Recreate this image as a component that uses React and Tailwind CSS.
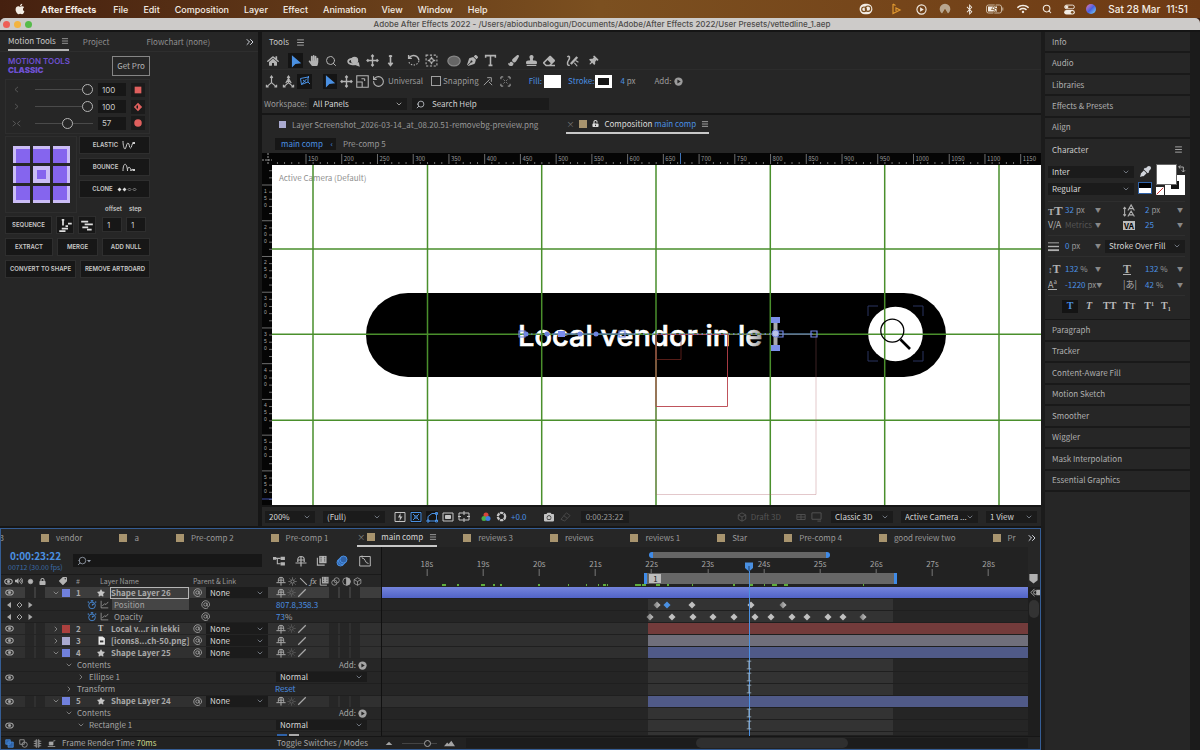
import { FaApple, FaBluetoothB, FaWifi, FaHome, FaHandPaper, FaPenNib, FaPaintBrush, FaStamp, FaEraser, FaThumbtack, FaCamera, FaLock, FaTag, FaStar, FaVolumeUp, FaEyeDropper, FaUnlockAlt } from 'react-icons/fa'
import { ChevronDown, ChevronRight, Search, Menu, RotateCcw, ChevronsRight } from 'lucide-react'

const menus = ['File', 'Edit', 'Composition', 'Layer', 'Effect', 'Animation', 'View', 'Window', 'Help']

const topPanels = ['Info', 'Audio', 'Libraries', 'Effects & Presets', 'Align']
const bottomPanels = ['Paragraph', 'Tracker', 'Content-Aware Fill', 'Motion Sketch', 'Smoother', 'Wiggler', 'Mask Interpolation', 'Essential Graphics']

const compTabs = [
  { name: 'vendor' }, { name: 'a' }, { name: 'Pre-comp 2' }, { name: 'Pre-comp 1' },
  { name: 'main comp', active: true },
  { name: 'reviews 3', afterActive: true }, { name: 'reviews' }, { name: 'reviews 1' }, { name: 'Star' },
  { name: 'Pre-comp 4' }, { name: 'good review two' }, { name: 'Pr' },
]

const rows = [
  { type: 'layer', num: 1, name: 'Shape Layer 26', icon: 'star', swatch: 'bg-[#7080dc]', open: true, selected: true, sun: true, bar: 'bg-linear-to-b from-[#7484dc] to-[#5163c6]', from: 17.2 },
  { type: 'prop', name: 'Position', value: '807.8,358.3', selected: true, keys: [22.1, 22.27, 22.71, 23.76, 24.33], activeKey: 22.27, half: [22.1, 24.33] },
  { type: 'prop', name: 'Opacity', value: '73', unit: '%', keys: [21.97, 22.37, 22.73, 23.1, 23.47, 23.84, 24.13, 24.5, 24.77, 25.14, 25.4, 25.77], half: [21.97, 25.77] },
  { type: 'layer', num: 2, name: 'Local v...r in lekki', icon: 'text', swatch: 'bg-[#ab403e]', sun: true, bar: 'bg-[#733b3b]', from: 21.93 },
  { type: 'layer', num: 3, name: '[icons8...ch-50.png]', icon: 'file', swatch: 'bg-[#a9a9cf]', bar: 'bg-[#706f7b]', from: 21.93 },
  { type: 'layer', num: 4, name: 'Shape Layer 25', icon: 'star', swatch: 'bg-[#7080dc]', open: true, sun: true, bar: 'bg-[#505a88]', from: 21.93 },
  { type: 'group', name: 'Contents', open: true, add: true, indent: 'pl-[65px]', beam: true },
  { type: 'group', name: 'Ellipse 1', eye: true, mode: true, indent: 'pl-[77px]', beam: true },
  { type: 'group', name: 'Transform', reset: true, indent: 'pl-[65px]', beam: true },
  { type: 'layer', num: 5, name: 'Shape Layer 24', icon: 'star', swatch: 'bg-[#7080dc]', open: true, sun: true, bar: 'bg-[#505a88]', from: 21.93 },
  { type: 'group', name: 'Contents', open: true, add: true, indent: 'pl-[65px]', beam: true },
  { type: 'group', name: 'Rectangle 1', open: true, eye: true, mode: true, indent: 'pl-[77px]', beam: true },
]

const seconds = [18, 19, 20, 21, 22, 23, 24, 25, 26, 27, 28]
const cached = [
  [18.27, 4], [18.54, 2], [18.97, 4], [19.17, 2], [19.3, 2], [19.98, 2], [20.51, 1], [20.84, 1], [21.05, 1], [21.14, 3], [21.21, 1],
  [21.7, 6], [21.83, 4], [22.07, 4], [22.27, 2], [22.72, 1], [23.45, 2], [23.75, 3], [24, 1], [24.14, 3], [24.2, 2], [24.35, 4], [25.77, 1],
]

const VIEW_START = 17.2
const VIEW_LENGTH = 11.5
const at = s => `${((s - VIEW_START) / VIEW_LENGTH) * 100}%`

function Icon({ size = 12, className = '', children }) {
  return (
    <svg viewBox="0 0 12 12" width={size} height={size} fill="none" stroke="currentColor" strokeWidth="1" className={`shrink-0 ${className}`} aria-hidden="true">
      {children}
    </svg>
  )
}

const Arrow = () => <Icon size={14}><path d="M2.500 1v10.500l3-3 5-.5z" fill="currentColor" stroke="none" /></Icon>
const Cross = () => <Icon size={13}><path d="M6 1v10M1 6h10M4.800 2.200 6 1l1.200 1.200M4.800 9.800 6 11l1.200-1.200M2.200 4.800 1 6l1.200 1.200M9.800 4.800 11 6 9.800 7.200" strokeWidth="1.300" /></Icon>
const Eye = () => <Icon size={9}><ellipse cx="6" cy="6" rx="5" ry="3.400" strokeWidth="1.400" /><circle cx="6" cy="6" r="1.600" fill="currentColor" /></Icon>
const Swirl = () => <Icon size={9}><path d="M9.500 10.200A5.200 5.200 0 1 1 11.300 5v2a1.600 1.600 0 0 1-3.200 0V3.500M8.100 6a2.200 2.200 0 1 1-4.400 0 2.200 2.200 0 0 1 4.400 0" strokeWidth="1.100" /></Icon>
const Hat = ({ size = 10 }) => <Icon size={size}><path d="M2.800 7V4.500a3.200 3 0 0 1 6.400 0V7M2.800 5h6.400M.5 8h11M6 2v9.500" strokeWidth="1.200" /></Icon>
const Sun = () => <Icon size={9}><circle cx="6" cy="6" r="2.300" /><path d="M6 .5v2M6 9.500v2M.5 6h2M9.500 6h2M2 2l1.300 1.300M8.700 8.700 10 10M10 2 8.700 3.300M3.300 8.700 2 10" strokeWidth=".8" /></Icon>
const Slash = () => <Icon size={10}><path d="M1.500 10.500 10.500 1.500" strokeWidth="1.400" /></Icon>
const BackSlash = () => <Icon size={9}><path d="M1.500 1.500 10.500 10.500" strokeWidth="1.400" /></Icon>
const Graph = () => <Icon size={9}><path d="M1.500 1v9.500H11M3 8l3-3 2 1 3-3.500" /></Icon>
const Film = ({ size = 10 }) => <Icon size={size}><path d="M3.500 1h8v8h-8z" fill="currentColor" stroke="none" /><path d="M1.500 3v8h8" strokeWidth="1.200" /><path d="M5.500 2v6M9.500 2v6" stroke="#262626" strokeDasharray="1 1" /></Icon>
const Play = () => <Icon size={9}><circle cx="6" cy="6" r="5.500" fill="currentColor" stroke="none" /><path d="M4.500 3.300v5.400L9 6z" fill="#262626" stroke="none" /></Icon>
const Axis = ({ label }) => <Icon size={13}><path d="M6 1.500v5.500L2 10.500M6 7l4 3.500M4.800 2.700 6 1l1.200 1.700M1.300 9v2h2M10.700 9v2h-2" strokeWidth="1.100" />{label && <path d="M3.500 7.500 6 3l2.500 4.500M4.500 6h3" />}</Icon>

function Dropdown({ label, value, className = '' }) {
  return (
    <div className={`relative shrink-0 flex items-center bg-[#1b1b1b] text-[#d6d6d6] ${className}`}>
      <select aria-label={label} className="w-full h-full appearance-none bg-transparent pl-1 outline-none">
        <option>{value}</option>
      </select>
      <ChevronDown size={8} className="absolute right-1 pointer-events-none text-gray-400" />
    </div>
  )
}

function ToolButton({ label, active, className = 'w-[18px]', children }) {
  return (
    <button aria-label={label} className={`h-[15px] shrink-0 flex items-center justify-center ${active ? 'bg-[#141414] text-[#4a90e2]' : 'text-[#b4b4b4]'} ${className}`}>
      {children}
    </button>
  )
}

function MenuBar() {
  return (
    <div className="h-[18px] shrink-0 flex items-center bg-linear-to-r from-[#45200f] via-[#7c5020] to-[#6e3a14] text-[#f3ece4] text-[9px] leading-none font-medium font-[Inter,sans-serif]">
      <FaApple size={12} className="ml-[14px]" />
      <nav className="flex items-center gap-[15px] ml-[15px]">
        <button className="font-bold mr-[2px]">After Effects</button>
        {menus.map(m => <button key={m}>{m}</button>)}
      </nav>
      <div className="ml-auto mr-[12px] flex items-center">
        <Icon size={14} className="mr-[17px]"><rect x=".5" y="1.500" width="11" height="9" rx="4.500" fill="currentColor" stroke="none" /><circle cx="4.300" cy="6.300" r="2" stroke="#7a4e20" /><circle cx="7.700" cy="5.700" r="2.300" stroke="#7a4e20" /></Icon>
        <Icon size={12} className="text-[#e0982f] mr-[14px]"><path d="M3 1v9.500L10 7 6 5v3M3 1l2.500 1.500" strokeWidth="1.200" /></Icon>
        <Icon size={11} className="mr-[12px]"><circle cx="6" cy="6" r="5" strokeWidth="1.200" /><path d="M4.500 3.500v5l4-2.500z" fill="currentColor" stroke="none" /></Icon>
        <Icon size={12} className="mr-[13px] text-[#b8a68f]"><path d="M3 10.500a5.300 5.300 0 1 1 6 0L6 6z" fill="currentColor" stroke="none" /><path d="M6 6 4 11h4z" fill="#7a4e20" stroke="none" /></Icon>
        <FaBluetoothB size={11} className="mr-[11px]" />
        <svg width="18" height="10" viewBox="0 0 18 10" className="mr-[13px]" aria-hidden="true">
          <rect x=".5" y="1" width="15" height="8" rx="2" fill="none" stroke="#c9b49c" />
          <rect x="2" y="2.500" width="9" height="5" fill="#f3ece4" />
          <path d="M9.500 0 5.500 5.500h3L7.500 10l4-5.500h-3z" fill="#fff" stroke="#7a4e20" strokeWidth=".8" />
          <path d="M16.800 3.500v3" stroke="#c9b49c" />
        </svg>
        <FaWifi size={12} className="mr-[13px]" />
        <Search size={10} strokeWidth={2.5} className="mr-[12px]" />
        <Icon size={11} className="mr-[11px]"><rect x=".7" y="1.200" width="10.600" height="4" rx="2" /><rect x=".2" y="6.500" width="11.600" height="5" rx="2.500" fill="currentColor" stroke="none" /><circle cx="3" cy="3.200" r="1.300" fill="currentColor" /><circle cx="9" cy="9" r="1.500" fill="#7a4e20" stroke="none" /></Icon>
        <span className="w-[10px] h-[10px] rounded-full bg-linear-to-br from-[#e66aa8] via-[#4b5fe0] to-[#7fd6ee] mr-[12px]" />
        <span className="flex gap-[6px] text-[10px]"><span>Sat 28 Mar</span><span>11:51</span></span>
      </div>
    </div>
  )
}

function TitleBar() {
  return (
    <div className="bg-[#3a1c10] shrink-0">
      <div className="h-[14px] rounded-t-[5px] bg-[#cdcbc9] flex items-center pl-[3px] pr-[32px] gap-[4px] border-b-2 border-[#151515]">
        <span className="w-[7px] h-[7px] rounded-full bg-[#ee5f56]" />
        <span className="w-[7px] h-[7px] rounded-full bg-[#f3b43f]" />
        <span className="w-[7px] h-[7px] rounded-full bg-[#56bb4a]" />
        <h1 className="flex-1 text-center text-[8px] leading-none font-medium text-[#4d4b49] font-[Inter,sans-serif] whitespace-nowrap">
          Adobe After Effects 2022 - /Users/abiodunbalogun/Documents/Adobe/After Effects 2022/User Presets/vettedline_1.aep
        </h1>
      </div>
    </div>
  )
}

const easeRows = [
  { label: 'Ease in', value: 100, mark: <path d="M8 2.500 4 6l4 3.500" />, dot: <rect x="2" y="2" width="8" height="8" /> },
  { label: 'Ease out', value: 100, mark: <path d="M4 2.500 8 6l-4 3.500" />, dot: <path d="M6 1 11 6 6 11 1 6zM6 4a2 2 0 0 0 0 4z" fillRule="evenodd" /> },
  { label: 'Ease both', value: 57, mark: <path d="M1 2.500 5 6 1 9.500M11 2.500 7 6l4 3.500" />, dot: <circle cx="6" cy="6" r="4.500" /> },
]

const anchors = [
  'border-t-[3px] border-l-[3px]', 'border-t-[3px]', 'border-t-[3px] border-r-[3px]',
  'border-l-[3px]', 'border-[4px]', 'border-r-[3px]',
  'border-b-[3px] border-l-[3px]', 'border-b-[3px]', 'border-b-[3px] border-r-[3px]',
]

const mtButton = 'h-[18px] bg-[#171717] border border-[#2e2e2e] flex items-center justify-center gap-1 whitespace-nowrap'

function MotionTools() {
  return (
    <section className="w-[258px] shrink-0 bg-[#262626] overflow-hidden">
      <div className="h-[20px] flex items-center pl-[8px] pr-[2px] text-[#8f8f8f] border-b border-[#2e2e2e]">
        <button className="h-[18px] flex items-center gap-[5px] border-b-2 border-[#b5b5b5] text-[#c8c8c8]">Motion Tools <Menu size={8} /></button>
        <button className="ml-[14px]">Project</button>
        <button className="ml-[37px]">Flowchart (none)</button>
        <ChevronsRight size={12} className="ml-auto text-gray-300" />
      </div>
      <div className="pl-[5px] pt-[4px] w-[150px] text-[6px] font-semibold font-[Inter,sans-serif] text-[#c9c9c9]">
        <div className="flex justify-between pl-[3px]">
          <h2 className="pt-px text-[8px] leading-[9px] font-semibold text-[#6d50cf]">MOTION TOOLS<br /><b>CLASSIC</b></h2>
          <button className="w-[38px] h-[20px] border border-[#858585] text-[8px] font-normal text-[#b4b4b4] font-['Noto_Sans_CJK_SC',sans-serif]">Get Pro</button>
        </div>
        <div className="mt-[3px] h-[55px] border border-[#2e2e2e] flex flex-col justify-evenly">
          {easeRows.map(r => (
            <div key={r.label} className="flex items-center pl-[6px] h-[14px]">
              <Icon size={9} className="text-[#666]">{r.mark}</Icon>
              <input type="range" aria-label={r.label} defaultValue={r.value} className="ml-[14px] w-[58px] h-[12px] appearance-none bg-transparent [&::-webkit-slider-runnable-track]:h-[1px] [&::-webkit-slider-runnable-track]:bg-[#4a4a4a] [&::-webkit-slider-thumb]:appearance-none [&::-webkit-slider-thumb]:w-[11px] [&::-webkit-slider-thumb]:h-[11px] [&::-webkit-slider-thumb]:-mt-[5px] [&::-webkit-slider-thumb]:rounded-full [&::-webkit-slider-thumb]:border-[1px] [&::-webkit-slider-thumb]:border-[#b5b5b5] [&::-webkit-slider-thumb]:bg-[#262626]" />
              <input aria-label={`${r.label} value`} defaultValue={r.value} className="ml-[5px] w-[28px] h-[13px] bg-[#171717] pl-[4px] text-[8px] font-normal outline-none" />
              <button aria-label={`Apply ${r.label}`} className="ml-[5px] w-[14px] h-[14px] bg-[#1b1b1b] flex items-center justify-center text-[#e0605e]">
                <svg width="10" height="10" viewBox="0 0 12 12" fill="currentColor">{r.dot}</svg>
              </button>
            </div>
          ))}
        </div>
        <div className="mt-[2px] flex gap-[2px]">
          <div className="w-[72px] h-[77px] border border-[#2e2e2e] flex items-center justify-center">
            <div className="grid grid-cols-3 gap-[3px]">
              {anchors.map(a => <button key={a} aria-label="Anchor point" className={`w-[17px] h-[17px] bg-[#8565ee] border-[#cbbdf6] ${a}`} />)}
            </div>
          </div>
          <div className="flex-1 flex flex-col gap-[4px]">
            <button className={mtButton}>ELASTIC <svg width="14" height="9" viewBox="0 0 14 9" fill="none" stroke="#ccc" aria-hidden="true"><path d="M1 0c0 4 1 8 2 8s1.500-6 3-6 1 5 2.500 5 1-5 3-5" /><path d="M10.500 1h2.500v2h-2.500z" fill="#ccc" stroke="none" /></svg></button>
            <button className={mtButton}>BOUNCE <svg width="14" height="9" viewBox="0 0 14 9" fill="none" stroke="#ccc" aria-hidden="true"><path d="M1 8c0-9 4-9 4.500 0 0-5 3-5 3.500 0 0-2 2-2 2-1" /><path d="M10.500 6h2.500v2h-2.500z" fill="#ccc" stroke="none" /></svg></button>
            <button className={mtButton}>CLONE <svg width="20" height="5" viewBox="0 0 20 5" fill="#ddd" aria-hidden="true"><path d="M2.500.5l2 2-2 2-2-2zM7.500.5l2 2-2 2-2-2z" /><path d="M12.500 1l1.500 1.500-1.500 1.500-1.500-1.500zM17.500 1l1.500 1.500-1.500 1.500-1.500-1.500z" fill="none" stroke="#aaa" strokeWidth=".7" /></svg></button>
            <div className="flex gap-[7px] pl-[26px] pt-[4px] leading-none"><label htmlFor="offset">offset</label><label htmlFor="step">step</label></div>
          </div>
        </div>
        <div className="mt-[3px] flex gap-[4px]">
          <button className={`${mtButton} w-[47px]`}>SEQUENCE</button>
          <button aria-label="Stagger" className={`${mtButton} w-[18px]`}><Icon size={15}><path d="M3 1.500h2M4 1v5M1 10.500h5M3 8.500h5M6 6.500h2M8 4.500h3" stroke="#ddd" strokeWidth="1.400" /></Icon></button>
          <button aria-label="Stack" className={`${mtButton} w-[18px]`}><Icon size={14}><path d="M1 3h6M4 5.500h7M2 8h5M6 10h4" stroke="#ddd" strokeWidth="1.500" /></Icon></button>
          <input id="offset" defaultValue="1" className="ml-[2px] w-[20px] h-[15px] mt-px bg-[#171717] border border-[#2e2e2e] pl-[4px] text-[8px] font-normal outline-none" />
          <input id="step" defaultValue="1" className="w-[20px] h-[15px] mt-px bg-[#171717] border border-[#2e2e2e] pl-[4px] text-[8px] font-normal outline-none" />
        </div>
        <div className="mt-[4px] flex gap-[4px]">
          <button className={`${mtButton} w-[48px]`}>EXTRACT</button>
          <button className={`${mtButton} w-[41px]`}>MERGE</button>
          <button className={`${mtButton} flex-1`}>ADD NULL</button>
        </div>
        <div className="mt-[4px] flex gap-[4px]">
          <button className={`${mtButton} w-[71px]`}>CONVERT TO SHAPE</button>
          <button className={`${mtButton} flex-1`}>REMOVE ARTBOARD</button>
        </div>
      </div>
    </section>
  )
}

function Tools() {
  return (
    <section className="h-[81px] shrink-0 bg-[#262626] text-[#9b9b9b]">
      <h2 className="h-[20px] flex items-center gap-[7px] pl-[7px] text-[#c8c8c8]">Tools <Menu size={9} /></h2>
      <div className="flex items-center h-[18px] pl-[2px] border-b border-[#2c2c2c]">
        <ToolButton label="Home"><FaHome size={12} /></ToolButton>
        <ToolButton label="Selection" active className="w-[15px] ml-[6px] mr-[1px]"><Arrow /></ToolButton>
        <ToolButton label="Hand"><FaHandPaper size={11} /></ToolButton>
        <ToolButton label="Zoom"><Search size={12} /></ToolButton>
        <ToolButton label="Orbit" className="w-[18px] ml-[5px]"><Icon size={14}><path d="M10 7.500c-2 2.500-9 1.500-9-1s5-3 7-1.500" strokeWidth="1.500" /><circle cx="6.500" cy="5.500" r="2.600" fill="currentColor" /><path d="m7 9.500 4 1.500-1-4z" fill="currentColor" stroke="none" /></Icon></ToolButton>
        <ToolButton label="Pan"><Cross /></ToolButton>
        <ToolButton label="Dolly"><Icon size={13}><path d="M6 1v9M4 8l2 2.500L8 8M4.500 2h3" strokeWidth="1.500" /></Icon></ToolButton>
        <ToolButton label="Rotate" className="w-[18px] ml-[5px]"><Icon size={13}><path d="M2 3.500A5 5 0 0 1 11 6M1.500 1v3h3" strokeWidth="1.300" /><path d="M11 6.500a5 5 0 0 1-9.500.5" strokeDasharray="1.300 1.300" /></Icon></ToolButton>
        <ToolButton label="Anchor"><Icon size={13}><rect x="1" y="1" width="10" height="10" strokeDasharray="2 1.500" /><circle cx="6" cy="6" r="1.700" /><path d="M6 2.500v2M6 7.500v2M2.500 6h2M7.500 6h2" strokeWidth="1.300" /></Icon></ToolButton>
        <ToolButton label="Ellipse" className="w-[18px] ml-[5px]"><Icon size={14}><ellipse cx="6" cy="6" rx="5.300" ry="4.200" fill="#666" stroke="#888" /></Icon></ToolButton>
        <ToolButton label="Pen"><FaPenNib size={11} /></ToolButton>
        <ToolButton label="Type"><Icon size={13}><path d="M1.500 3.500V1.500h9v2M6 1.500v9M4.200 10.500h3.600" strokeWidth="1.400" /></Icon></ToolButton>
        <ToolButton label="Brush" className="w-[18px] ml-[5px]"><FaPaintBrush size={11} /></ToolButton>
        <ToolButton label="Clone stamp"><FaStamp size={11} /></ToolButton>
        <ToolButton label="Eraser"><FaEraser size={12} /></ToolButton>
        <ToolButton label="Roto brush" className="w-[18px] ml-[5px]"><Icon size={14}><path d="M2 2.500c2-2 2.500 1 1 3s-1 5 1 4" strokeWidth="1.300" /><path d="m5 8.500 5.500-6" strokeWidth="2" /><path d="m8 7.500 2.500 3M9 5.500 11.500 7" /></Icon></ToolButton>
        <ToolButton label="Puppet pin" className="w-[18px] ml-[3px]"><FaThumbtack size={10} className="rotate-45" /></ToolButton>
      </div>
      <div className="flex items-center h-[22px] pl-[1px]">
        <ToolButton label="Local axis" className="w-[17px]"><Axis /></ToolButton>
        <ToolButton label="World axis" className="w-[17px]"><Axis label /></ToolButton>
        <ToolButton label="View axis" active className="w-[15px]"><Icon><path d="M1.500 3.500 9 2v5L2.500 9.500zM9 7l2 2M4 5l3 2.500M7.500 4l-5 5.500M9.500 1v2" /></Icon></ToolButton>
        <ToolButton label="Select" active className="w-[14px] ml-[11px]"><Arrow /></ToolButton>
        <ToolButton label="Position" className="w-[16px] ml-[1px]"><Cross /></ToolButton>
        <ToolButton label="Scale" className="w-[16px]"><Icon size={13}><path d="M.7.7h10.600v10.600H.7zM.7 6.500h5v4.800M8 3.500v2M5 3.500h3" /></Icon></ToolButton>
        <ToolButton label="Rotation" className="w-[17px]"><RotateCcw size={13} /></ToolButton>
        <span className="ml-[1px]">Universal</span>
        <label className="ml-[8px] flex items-center gap-[2px]">
          <input type="checkbox" className="appearance-none w-[10px] h-[10px] border border-[#a0a0a0]" />Snapping
        </label>
        <ToolButton label="Snap edges" className="w-[17px] ml-[1px]"><Icon size={10}><path d="M1 11 8 4M5 2h5v5M7 7l4 4" /></Icon></ToolButton>
        <ToolButton label="Snap features" className="w-[17px]"><Icon size={11}><path d="M1 3.500V1h2.500M8.500 1H11v2.500M11 8.500V11H8.500M3.500 11H1V8.500M4 4l1 1M8 4 7 5M4 8l1-1M8 8 7 7" /></Icon></ToolButton>
        <button className="ml-[15px] flex items-center gap-[2px] text-[#4a90e2]">Fill:<span className="w-[17px] h-[13px] bg-white" /></button>
        <button className="ml-[7px] flex items-center gap-[1px] text-[#4a90e2]">Stroke:<span className="w-[17px] h-[13px] border-[3px] border-white bg-[#141414]" /></button>
        <span className="ml-[8px]"><span className="text-[#4a90e2]">4</span> px</span>
        <button className="ml-[19px] flex items-center gap-[3px]">Add: <Play /></button>
      </div>
      <div className="flex items-center h-[20px] mt-[2px] pl-[2px]">
        <label htmlFor="workspace" className="w-[45px]">Workspace:</label>
        <div className="relative flex items-center w-[98px] h-[12px] bg-[#1b1b1b] text-[#d6d6d6]">
          <select id="workspace" className="w-full appearance-none bg-transparent pl-1"><option>All Panels</option></select>
          <ChevronDown size={8} className="absolute right-1 pointer-events-none" />
        </div>
        <div className="ml-[5px] flex items-center w-[137px] h-[12px] bg-[#1b1b1b] pl-[4px] gap-[7px] text-gray-300">
          <Search size={9} className="-scale-x-100 shrink-0" />
          <input aria-label="Search Help" placeholder="Search Help" className="w-full bg-transparent outline-none placeholder:text-[#cfcfcf]" />
        </div>
      </div>
    </section>
  )
}

const PX = 0.7147
const hTicks = Array.from({ length: 106 }, (_, i) => 110 + i * 10)
const vTicks = Array.from({ length: 47 }, (_, i) => 130 + i * 10)

function Viewer() {
  return (
    <div className="flex-1 min-h-0 flex flex-col bg-black overflow-hidden">
      {/* horizontal ruler */}
      <svg height="12" className="w-full shrink-0 bg-[#050505]" aria-hidden="true">
        <path d="M0 7h10M6 0v12" stroke="#999" strokeDasharray="2 1" />
        {hTicks.map(u => {
          const x = 44 + (u - 150) * PX
          const major = u % 50 === 0
          return (
            <g key={u}>
              <path d={`M${x} ${major ? 1 : 9}v${major ? 10 : 2}`} stroke="#8a8a8a" strokeWidth=".8" />
              {major && <text x={x + 2} y="8" fontSize="6" fill="#9a9a9a">{u}</text>}
            </g>
          )
        })}
        <path d="M418.500 0v11" stroke="#3f74b8" />
      </svg>
      <div className="flex flex-1 min-h-0">
        {/* vertical ruler, digits stacked */}
        <svg className="w-[10px] h-full shrink-0 bg-[#050505]" aria-hidden="true">
          {vTicks.map(u => {
            const y = 20 + (u - 150) * PX
            const major = u % 50 === 0
            return (
              <g key={u}>
                <path d={`M${major ? 0 : 7} ${y}h${major ? 10 : 3}`} stroke="#8a8a8a" strokeWidth=".8" />
                {major && [...String(u)].map((d, i) => <text key={i} x="2" y={y + 8 + i * 7} fontSize="5" fill="#a8a8a8" className="font-['Liberation_Sans',sans-serif]">{d}</text>)}
              </g>
            )
          })}
          <path d="M0 334h10" stroke="#3f4fa8" />
        </svg>
        <svg className="flex-1 h-full bg-white" role="img" aria-label="Composition view">
          <rect x="94" y="128" width="580" height="84" rx="42" fill="#000" />
          <circle cx="623.500" cy="169" r="27.300" fill="#fff" />
          <defs>
            <linearGradient id="fade"><stop offset=".93" stopColor="#fff" /><stop offset="1" stopColor="#999" /></linearGradient>
          </defs>
          <text x="246" y="181" fontSize="29" fontWeight="500" fill="url(#fade)" stroke="url(#fade)" strokeWidth=".7" className="font-[Inter,sans-serif]">Local vendor in le</text>
          <text x="7" y="16" fontSize="8" fill="#8f8f8f">Active Camera (Default)</text>
          {/* guides */}
          <path d="M41 0v341M155.500 0v341M269.700 0v341M384 0v341M498.300 0v341M612.700 0v341M727 0v341" stroke="#4a8f2c" strokeWidth="1.500" />
          <path d="M0 84h2000M0 169.300h2000M0 255.300h2000" stroke="#4a8f2c" strokeWidth="1.500" />
          <path d="M384 169.500h71.500v72H384z" fill="none" stroke="#b8404a" strokeOpacity=".9" />
          <path d="M384 169.500h25v25h-25z" fill="none" stroke="#7a2a22" strokeOpacity=".7" />
          <path d="M384 169.500h160v160H384z" fill="none" stroke="#b0606a" strokeOpacity=".35" />
          {/* magnifier */}
          <circle cx="620.300" cy="165.700" r="11.500" fill="none" stroke="#000" strokeWidth="1.300" />
          <path d="m628.500 174.500 9.500 9.500" stroke="#000" strokeWidth="2.600" />
          <path d="M596 151v-10h10M641 141h10v10M651 186v10h-10M606 196h-10v-10" fill="none" stroke="#2b3560" />
          {/* motion path */}
          <path d="M250 169h52" stroke="#6f84e0" strokeDasharray="1.500 3" />
          <path d="M280 169h82M503 169h38" stroke="#5b6fd0" strokeWidth="1.200" />
          <path d="M362 169h140" stroke="#6f84e0" strokeWidth="1.500" strokeDasharray="1.500 3" />
          <path d="M247 166h6v6h-6zM347 166h6v6h-6zM505 166h6v6h-6zM539 166h6v6h-6z" fill="none" stroke="#6f84e0" strokeWidth="1.200" />
          <path d="M286 166h7v6h-7z" fill="#7b8df0" />
          <path d="M254 169m-2.500 0a2.500 2.500 0 1 0 5 0a2.500 2.500 0 1 0-5 0M275 169m-2.500 0a2.500 2.500 0 1 0 5 0a2.500 2.500 0 1 0-5 0M308 169m-2.500 0a2.500 2.500 0 1 0 5 0a2.500 2.500 0 1 0-5 0M324 169m-2.500 0a2.500 2.500 0 1 0 5 0a2.500 2.500 0 1 0-5 0" fill="#6f84e0" />
          <path d="M501.500 154h4v29h-4z" fill="#a9a9ac" />
          <path d="M499 152h9v6h-9zM499 180h9v6h-9z" fill="#7b8fea" />
          <circle cx="503.500" cy="168.500" r="3.500" fill="#b9c2ea" stroke="#6f84e0" />
        </svg>
      </div>
    </div>
  )
}

function Composition() {
  return (
    <section className="flex-1 min-h-0 flex flex-col bg-[#262626] text-[#999]">
      <div className="h-[19px] shrink-0 flex items-center pl-[17px]">
        <button className="flex items-center gap-[6px]"><span className="w-[7px] h-[7px] bg-[#a9a9cf]" />Layer Screenshot_2026-03-14_at_08.20.51-removebg-preview.png</button>
        <button className="ml-[28px] h-full flex items-center gap-[5px] border-b-2 border-[#c8c8c8] text-[#dcdcdc]">
          <span className="text-[#777]">×</span>
          <span className="w-[8px] h-[8px] bg-[#a8946e]" />
          <FaUnlockAlt size={7} />
          <span>Composition <span className="text-[#4a90e2]">main comp</span></span>
          <Menu size={8} />
        </button>
      </div>
      <div className="h-[19px] shrink-0 flex items-center pl-[13px]">
        <button className="w-[61px] h-[12px] bg-[#161616] text-[#4a90e2] flex items-center justify-between pl-[6px] pr-[3px]">main comp <span>‹</span></button>
        <button className="ml-[7px]">Pre-comp 5</button>
      </div>
      <Viewer />
      <div className="h-[21px] shrink-0 flex items-center border-t-2 border-[#161616] text-[#c4c4c4]">
        <Dropdown label="Magnification" value="200%" className="w-[50px] h-[12px] ml-[3px]" />
        <Dropdown label="Resolution" value="(Full)" className="w-[62px] h-[12px] ml-[8px]" />
        <div className="flex items-center gap-[4px] ml-[9px]">
          <Icon><path d="M1 1.500h10v9H1z" /><path d="M6.500 2 4 6.500h2L5.500 10 8.500 5.500h-2z" fill="currentColor" stroke="none" /></Icon>
          <Icon className="text-[#4a90e2] bg-[#141414]"><path d="M1 1.500h10v9H1zM3 3l2 2M9 3 7 5M3 9l2-2M9 9 7 7" /><path d="M5 5h2v2H5z" /></Icon>
          <Icon className="text-[#4a90e2] bg-[#141414]"><path d="M2 10V5.500L6 2.500h4.500V10zM1 9h2v2H1zM9.500 9h2v2h-2zM9.500 1.500h2v2h-2z" /></Icon>
          <Icon><path d="M1 2h10v8H1z" /><path d="M3.500 4.500h5v3h-5z" fill="currentColor" /></Icon>
          <Icon><path d="M1 2h10v7H1zM6 0v4M6 7v4M0 5.500h3M9 5.500h3" /></Icon>
        </div>
        <svg width="10" height="10" viewBox="0 0 10 10" className="ml-[11px]" aria-hidden="true"><circle cx="5" cy="3" r="2.500" fill="#d8453a" /><circle cx="3" cy="6.500" r="2.500" fill="#4aae48" /><circle cx="7" cy="6.500" r="2.500" fill="#3f7fe0" /></svg>
        <Icon size={11} className="ml-[5px]"><circle cx="6" cy="6" r="4" strokeWidth="2.500" strokeDasharray="3.500 .7" /></Icon>
        <span className="ml-[4px] text-[#4a90e2]">+0.0</span>
        <FaCamera size={10} className="ml-[17px]" />
        <Icon size={11} className="ml-[6px] text-[#4a4a4a]"><path d="m1 9 6-7 4 3-6 6zM4 5l4 3" /></Icon>
        <span className="ml-[10px] w-[48px] h-[12px] bg-[#1c1c1c] flex items-center justify-center text-[#999]">0:00:23:22</span>
        <div className="ml-auto flex items-center text-[#555]">
          <Icon size={10}><path d="M6 1 1.500 3.500v5L6 11l4.500-2.500v-5zM1.500 3.500 6 6l4.500-2.500M6 6v5" /></Icon>
          <button className="ml-[4px] whitespace-nowrap">Draft 3D</button>
          <Icon size={10} className="ml-[15px]"><path d="M1 3h10v6H1zM6 3v6M1 6h10" /></Icon>
          <Icon size={11} className="ml-[5px]"><path d="M1 2h10v7H1zM7 11h4" /></Icon>
          <Dropdown label="Renderer" value="Classic 3D" className="w-[62px] h-[12px] ml-[9px]" />
          <Dropdown label="Camera" value="Active Camera ..." className="w-[77px] h-[12px] ml-[8px]" />
          <Dropdown label="View layout" value="1 View" className="w-[51px] h-[12px] ml-[8px] mr-[4px]" />
        </div>
      </div>
    </section>
  )
}

function CharValue({ icon, value, unit, muted, iconWidth = 'w-[17px]', className = '' }) {
  return (
    <div className={`flex items-center ${className}`}>
      <span className={`flex shrink-0 ${iconWidth}`}>{icon}</span>
      <span className={muted ? 'text-[#555]' : 'text-[#4a90e2]'}>{value}</span>
      {unit && <span className="ml-[2px] text-[#999]">{unit}</span>}
      <span className="ml-auto text-[6px] text-[#888]">▼</span>
    </div>
  )
}

const letter = 'font-["Liberation_Serif",serif] font-bold leading-none whitespace-nowrap'

function Character() {
  return (
    <section className="pl-[3px] pr-[5px] border-b border-[#171717]">
      <h2 className="h-[21px] flex items-center justify-between pl-[4px] pr-[2px] text-[#c8c8c8]">Character <Menu size={9} /></h2>
      <div className="h-[41px] flex">
        <div className="flex flex-col gap-[5px] pt-[6px]">
          <Dropdown label="Font family" value="Inter" className="w-[86px] h-[12px]" />
          <Dropdown label="Font style" value="Regular" className="w-[86px] h-[12px]" />
        </div>
        <div className="ml-[4px] pt-[6px] flex flex-col items-center gap-[5px]">
          <FaEyeDropper size={11} className="text-gray-300" />
          <span className="w-[14px] h-[12px] border border-[#2f62a8] bg-linear-to-b from-black from-50% to-white to-50%" />
        </div>
        <div className="relative ml-[4px] w-[30px] h-[31px] mt-[4px]">
          <span className="absolute right-0 bottom-0 w-[20px] h-[20px] border-[6px] border-white bg-[#141414]" />
          <span className="absolute left-0 top-0 w-[21px] h-[21px] bg-white border border-[#666]" />
          <span className="absolute left-0 bottom-0 w-[8px] h-[8px] bg-white flex"><Icon size={8}><path d="M1 11 11 1" stroke="#c33" strokeWidth="1.500" /></Icon></span>
          <span className="absolute -right-px top-px"><Icon size={8}><path d="M1 3h7v7M3.500.5 1 3l2.500 2.500M5.500 8 8 10.500 10.500 8" stroke="#bbb" strokeWidth="1.300" /></Icon></span>
        </div>
      </div>
      <div className="h-[34px] pb-[3px] grid grid-cols-[53px_1fr] gap-x-[22px] border-t border-[#2e2e2e] pr-[2px]">
        <CharValue icon={<span className={letter}><span className="text-[9px]">T</span><span className="text-[13px]">T</span></span>} value="32" unit="px" />
        <CharValue iconWidth="w-[22px]" icon={<Icon size={13}><path d="M4.500 6 7.500.8 10.500 6M5.500 4.300h4M4.500 11.500l3-5 3 5M5.500 10h4M1.500 3v8M.3 4.500 1.500 3l1.200 1.500M.3 9.500 1.500 11l1.200-1.500" /></Icon>} value="2" unit="px" />
        <CharValue icon={<span className="text-[9px]">V/A</span>} value="Metrics" muted />
        <CharValue iconWidth="w-[22px]" icon={<span className="bg-[#bbb] text-black text-[8px] leading-[9px] px-px font-bold">VA</span>} value="25" />
      </div>
      <div className="h-[21px] flex items-center justify-between border-t border-[#2e2e2e]">
        <CharValue icon={<Icon size={11}><path d="M0 2h12" /><path d="M0 6h12" strokeWidth="1.500" /><path d="M0 10h12" strokeWidth="2" /></Icon>} value="0" unit="px" className="w-[53px]" />
        <Dropdown label="Stroke order" value="Stroke Over Fill" className="w-[80px] h-[13px]" />
      </div>
      <div className="h-[39px] py-[3px] grid grid-cols-[53px_1fr] gap-x-[22px] border-t border-[#2e2e2e] pr-[2px]">
        <CharValue icon={<span className={letter}><span className="text-[9px]">↕</span><span className="text-[12px]">T</span></span>} value="132" unit="%" />
        <CharValue iconWidth="w-[22px]" icon={<span className={`${letter} text-[12px] underline`}>T</span>} value="132" unit="%" />
        <CharValue icon={<span className="text-[9px] underline">Aª</span>} value="-1220" unit="px" />
        <CharValue iconWidth="w-[22px]" icon={<span className="text-[9px]">|あ|</span>} value="42" unit="%" />
      </div>
      <div className={`h-[24px] pb-[3px] flex items-center pl-[14px] gap-[7px] border-t border-[#2e2e2e] text-[10px] text-[#bbb] ${letter}`}>
        <button className="w-[16px] h-[13px] bg-[#141414] text-[#4a90e2]">T</button>
        <button className="w-[8px] italic">T</button>
        <button className="ml-[3px]">TT</button>
        <button>T<span className="text-[8px]">T</span></button>
        <button className="ml-[2px]">T<sup className="text-[6px]">1</sup></button>
        <button>T<sub className="text-[6px]">1</sub></button>
      </div>
    </section>
  )
}

function SidePanels() {
  return (
    <aside className="w-[159px] shrink-0 pl-[4px] pr-[10px] bg-[#1b1b1b]">
      <div className="h-full bg-[#262626] text-[#b0b0b0]">
        <div className="h-[107px] flex flex-col">
          {topPanels.map(p => <button key={p} className="flex-1 flex items-center pl-[7px] border-b-2 border-[#191919]">{p}</button>)}
        </div>
        <Character />
        <div className="h-[172px] flex flex-col">
          {bottomPanels.map(p => <button key={p} className="flex-1 flex items-center pl-[7px] border-b-2 border-[#191919]">{p}</button>)}
        </div>
      </div>
    </aside>
  )
}

function LayerSwitches({ sun }) {
  return (
    <div className="w-[105px] shrink-0 h-full flex items-center text-[#a8a8a8]">
      <span className="w-[11px]"><Hat /></span>
      <span className="w-[10px] opacity-50">{sun && <Sun />}</span>
      <Slash />
      <div className="ml-[22px] flex gap-[2px] h-full">
        <span className="w-[9px] bg-[#262626]" /><span className="w-[9px] bg-[#262626]" /><span className="w-[9px] bg-[#262626]" />
      </div>
    </div>
  )
}

function LayerCell({ row }) {
  const Twirl = row.open ? ChevronDown : ChevronRight
  if (row.type === 'layer') {
    return (
      <div className={`w-[380px] shrink-0 flex items-center pl-[4px] text-[#aaa] font-bold border-b border-[#242424] ${row.selected ? 'bg-[#3d3d3d]' : 'bg-[#303030]'}`}>
        <span className="w-[20px] shrink-0"><Eye /></span>
        <span className="w-[9px] shrink-0 h-full bg-[#262626]" /><span className="ml-[2px] w-[9px] shrink-0 h-full bg-[#262626]" />
        <button aria-label="Toggle" className="ml-[7px] shrink-0"><Twirl size={8} /></button>
        <span className={`ml-[2px] w-[8px] h-[8px] shrink-0 ${row.swatch}`} />
        <span className="ml-[6px] w-[21px] shrink-0">{row.num}</span>
        <span className="w-[13px] shrink-0 text-[#c4c4c4]">
          {row.icon === 'star' && <FaStar size={8} />}
          {row.icon === 'text' && <span className="pl-px font-['Liberation_Serif',serif]">T</span>}
          {row.icon === 'file' && <Icon size={9}><path d="M2 .5h5.500L10.500 3v8.500H2z" fill="#e8e8e8" stroke="none" /><path d="M4 6h4.500v2.500H4z" fill="#333" stroke="none" /></Icon>}
        </span>
        <span className={`w-[79px] shrink-0 whitespace-nowrap leading-[10px] ${row.selected ? 'border border-[#b5b5b5]' : 'pl-px'}`}>{row.name}</span>
        <span className="w-[14px] shrink-0 pl-[4px] mr-[3px]"><Swirl /></span>
        <Dropdown label="Parent" value="None" className="w-[62px] h-[11px] font-normal mr-[8px]" />
        <LayerSwitches sun={row.sun} />
      </div>
    )
  }
  if (row.type === 'prop') {
    return (
      <div className="w-[380px] shrink-0 flex items-center pl-[5px] text-[#a4a4a4] border-b border-[#1f1f1f]">
        <svg width="27" height="8" viewBox="0 0 27 8" fill="#a8a8a8" aria-hidden="true"><path d="M5 1v6L1 4zM22.500 1v6l4-3z" /><path d="M13.500 1.500 16 4l-2.500 2.500L11 4z" fill="none" stroke="#a8a8a8" /></svg>
        <Icon size={10} className="ml-[54px] text-[#4a90e2]"><circle cx="6" cy="6.500" r="4" /><path d="M6 6.500 8 4.500M4.500 1h3M10 2l1 1M2 2 1 3" strokeWidth="1.300" /></Icon>
        <span className="ml-[3px] mr-[3px]"><Graph /></span>
        <span className={`w-[77px] h-[11px] flex items-center pl-[2px] ${row.selected ? 'bg-[#454545]' : ''}`}>{row.name}</span>
        <span className="ml-[12px] w-[75px]"><Swirl /></span>
        <span><span className="text-[#4a90e2]">{row.value}</span>{row.unit}</span>
      </div>
    )
  }
  return (
    <div className="w-[380px] shrink-0 flex items-center pl-[4px] text-[#a4a4a4] border-b border-[#1f1f1f]">
      <span className="w-0">{row.eye && <Eye />}</span>
      <div className={`flex-1 flex items-center gap-[4px] -ml-[5px] ${row.indent}`}><Twirl size={8} />{row.name}</div>
      {row.add && <button className="flex items-center gap-[2px] mr-[14px]">Add: <Play /></button>}
      {row.mode && <Dropdown label="Blend mode" value="Normal" className="w-[91px] h-[10px] mr-[14px]" />}
      {row.reset && <button className="w-[106px] text-left text-[#4a90e2]">Reset</button>}
    </div>
  )
}

function Track({ row }) {
  return (
    <div className={`relative flex-1 border-b border-[#1f1f1f] ${row.type === 'layer' ? 'bg-[#2f2f2f]' : 'bg-[#252525]'}`}>
      <span className="absolute inset-y-0 bg-[#333]" style={{ left: at(21.93), right: `calc(100% - ${at(26.3)})` }} />
      {row.bar && <span className={`absolute inset-y-0 right-0 ${row.bar}`} style={{ left: at(row.from) }} />}
      {(row.keys || []).map(k => (
        <span
          key={k}
          className={`absolute top-1/2 w-[5px] h-[5px] -translate-1/2 rotate-45 ${k === row.activeKey ? 'bg-[#4a90e2]' : row.half?.includes(k) ? 'bg-linear-to-tr from-[#777] to-[#c8c8c8]' : 'bg-[#c0c0c0]'}`}
          style={{ left: at(k) }}
        />
      ))}
      {row.beam && (
        <svg width="5" height="9" viewBox="0 0 5 9" className="absolute top-1/2 -translate-1/2 z-10" style={{ left: at(23.733) }} aria-hidden="true">
          <path d="M0 .5h5M0 8.500h5M2.500 0v9" stroke="#9fb8cc" />
        </svg>
      )}
    </div>
  )
}

function TimeRuler() {
  return (
    <div className="relative flex-1 bg-[#222] text-[#a4a4a4] border-l border-[#111]">
      <span className="absolute top-[5px] h-[6px] bg-[#666] border-x-4 border-[#3f8be8] rounded-[3px]" style={{ left: at(21.95), right: `calc(100% - ${at(25.18)})` }} />
      {seconds.map(s => (
        <span key={s} className="absolute top-[12px] -translate-x-1/2 flex flex-col items-center leading-[10px]" style={{ left: at(s) }}>
          {s}s<span className="w-px h-[7px] bg-[#777]" />
        </span>
      ))}
      <span className="absolute top-[26px] z-10 h-[11px] bg-[#676767] border-x-3 border-[#3f8be8]" style={{ left: at(21.87), right: `calc(100% - ${at(26.37)})` }} />
      <span className="absolute top-[27px] z-10 w-[12px] h-[9px] bg-[#bcbcbc] text-[#222] text-center leading-[9px]" style={{ left: at(21.96) }}>1</span>
      {cached.map(([s, w]) => <span key={s} className="absolute bottom-[1px] h-[2px] bg-[#5fae3c]" style={{ left: at(s), width: w }} />)}
      <span className="absolute top-[22px] bottom-0 z-10 w-px bg-[#4a90e2]" style={{ left: at(23.733) }} />
      <svg width="9" height="10" viewBox="0 0 9 10" className="absolute top-[15px] -translate-x-1/2 z-10" style={{ left: at(23.733) }} aria-hidden="true"><path d="M.5.5h8V6l-4 3.500L.5 6z" fill="#4a90e2" /><path d="M4.500 4v5" stroke="#1d3d66" /></svg>
    </div>
  )
}

function Timeline() {
  return (
    <section className="h-[222px] shrink-0 mt-[2px] border border-[#355d94] bg-[#262626] flex flex-col overflow-hidden">
      <div className="h-[18px] shrink-0 flex items-center pr-[2px] text-[#9a9a9a]">
        <div className="flex-1 h-full min-w-0 flex items-center overflow-hidden whitespace-nowrap">
          <span className="w-[3px] overflow-hidden flex justify-end">3</span>
          {compTabs.map(t => t.active ? (
            <button key={t.name} className="ml-[29px] h-full flex items-center gap-[6px] border-b-2 border-[#c8c8c8] text-[#d6d6d6]">
              <span className="w-[4px] text-[#888]">×</span><span className="w-[8px] h-[8px] bg-[#a8946e]" />{t.name} <Menu size={8} />
            </button>
          ) : (
            <button key={t.name} className={`flex items-center gap-[7px] ${t.afterActive ? 'ml-[26px]' : 'ml-[37px]'}`}>
              <span className="w-[8px] h-[8px] bg-[#a8946e]" />{t.name}
            </button>
          ))}
        </div>
        <ChevronsRight size={12} className="ml-[10px] text-gray-300" />
      </div>
      <div className="h-[40px] shrink-0 flex">
        <div className="w-[380px] shrink-0">
          <div className="flex items-center h-[27px]">
            <div className="w-[72px] pl-[7px] text-[#4a90e2] whitespace-nowrap">
              <div className="text-[10px] leading-[13px] font-bold pl-[2px]">0:00:23:22</div>
              <div className="text-[7px] leading-[11px] text-[#3a6ca8]">00712 (30.00 fps)</div>
            </div>
            <div className="w-[189px] h-[13px] bg-[#171717] flex items-center pl-[4px] text-gray-400">
              <Search size={10} className="-scale-x-100 shrink-0" />
              <Icon size={4}><path d="M0 3h12L6 10z" fill="currentColor" stroke="none" /></Icon>
              <input aria-label="Search layers" className="w-full bg-transparent outline-none" />
            </div>
            <div className="ml-[11px] flex items-center gap-[9px] text-[#b4b4b4]">
              <Icon size={13}><path d="M0 4h7M4 4v5h3" /><path d="M7 2.500h4v3H7zM7 7.500h4v3H7zM0 2.800h3v2.400H0z" fill="currentColor" stroke="none" /></Icon>
              <Hat size={12} />
              <Film size={11} />
              <Icon className="text-[#4a90e2]"><circle cx="4.500" cy="7.500" r="3.500" fill="#2f62a8" /><circle cx="6" cy="6" r="3.500" fill="#2f62a8" /><circle cx="7.500" cy="4.500" r="3.500" fill="#2f62a8" /></Icon>
              <Icon className="ml-[2px]"><path d="M.7 1.500h10.600v9.500H.7zM3 3c4 0 2.500 5.500 6.500 5.500M3 .5v2" /></Icon>
            </div>
          </div>
          <div className="h-[13px] flex items-center border-t border-[#1a1a1a] text-[7px] text-[#9a9a9a]">
            <div className="w-[57px] shrink-0 pl-[3px] flex items-center gap-[2px] text-[#b4b4b4]"><Eye /><FaVolumeUp size={8} className="mr-[2px]" /><Icon size={7}><circle cx="6" cy="6" r="4" fill="currentColor" /></Icon><FaLock size={7} className="ml-[3px]" /></div>
            <FaTag size={8} className="ml-[1px] text-[#b4b4b4] rotate-90" />
            <span className="ml-[9px] w-[24px] shrink-0">#</span>
            <span className="w-[93px] shrink-0">Layer Name</span>
            <span className="w-[83px] shrink-0">Parent &amp; Link</span>
            <div className="flex items-center gap-[2px] text-[#a8a8a8]">
              <Hat /><Sun /><BackSlash /><i className="font-serif text-[9px] leading-none">fx</i><Film />
              <Icon size={9}><circle cx="4.500" cy="7.500" r="3.500" /><circle cx="7.500" cy="4.500" r="3.500" /></Icon>
              <Icon size={9}><circle cx="6" cy="6" r="5" /><path d="M6 1a5 5 0 0 1 0 10z" fill="currentColor" /></Icon>
              <Icon size={9}><path d="M6 1 1.500 3.500v5L6 11l4.500-2.500v-5zM1.500 3.500 6 6l4.500-2.500M6 6v5" /></Icon>
            </div>
          </div>
        </div>
        <TimeRuler />
        <div className="w-[12px] flex items-end pb-[3px]"><Icon size={11} className="text-[#b0b0b0]"><path d="M1.500 1h9v7L6 11.500 1.500 8z" fill="currentColor" stroke="none" /></Icon></div>
      </div>
      <div className="flex-1 min-h-0 flex">
        <div className="flex-1 flex flex-col relative">
          {rows.map((row, i) => (
            <div key={i} className="flex-1 min-h-0 flex"><LayerCell row={row} /><div className="w-px bg-[#111]" /><Track row={row} /></div>
          ))}
          {/* next row, scrolled out of view */}
          <div className="h-[4px] shrink-0 flex">
            <div className="w-[380px] shrink-0 flex justify-end gap-[2px] pr-[82px] pt-[2px]"><span className="w-[10px] bg-[#2f62a8]" /><span className="w-[10px] bg-[#aaa]" /></div>
            <div className="w-px bg-[#111]" />
            <Track row={{ type: 'group' }} />
          </div>
          <div className="absolute inset-y-0 left-[381px] right-0 pointer-events-none">
            <span className="absolute inset-y-0 w-px bg-[#4a90e2]" style={{ left: at(23.733) }} />
          </div>
        </div>
        <div className="w-[12px] bg-[#1e1e1e] flex flex-col items-center gap-[2px]">
          <Icon size={11} className="text-[#b0b0b0]"><path d="M6 2 2 6l4 4M5 6a2 2 0 1 0 4 0 2 2 0 1 0-4 0" /><path d="M8 3h4v6H8z" fill="currentColor" stroke="none" /></Icon>
          <span className="w-[10px] h-[18px] rounded-full bg-[#333]" />
        </div>
      </div>
      <div className="h-[13px] shrink-0 flex items-center bg-[#222] border-t border-[#161616] text-[#a4a4a4]">
        <div className="flex items-center gap-[5px] pl-[4px] text-[#a8a8a8]">
          <Icon size={9} className="text-[#4a90e2]"><path d="M1 1h6v6H1zM4 4h7v7H4z" fill="#2f62a8" /></Icon>
          <Icon size={9}><path d="M1 1h6v6H1z" /><circle cx="7.500" cy="7.500" r="3.500" /></Icon>
          <Icon size={9}><path d="M1 3h3M1 6h3M1 9h3M8 3h3M8 6h3M8 9h3M4 1h1v10H4zM7 1h1v10H7z" /></Icon>
          <Icon size={9}><path d="M1 10h10M3 8V4h5v4zM8 3l3-1" fill="currentColor" /></Icon>
        </div>
        <span className="ml-[6px]">Frame Render Time <span className="text-[#c9d68a]">70ms</span></span>
        <button className="ml-auto mr-[17px] whitespace-nowrap">Toggle Switches / Modes</button>
        <div className="w-[655px] flex items-center">
          <Icon size={8}><path d="M1 9 6 4l5 5z" fill="currentColor" stroke="none" /></Icon>
          <input type="range" aria-label="Timeline zoom" defaultValue="80" className="ml-[9px] w-[35px] h-[8px] appearance-none bg-transparent [&::-webkit-slider-runnable-track]:h-[1px] [&::-webkit-slider-runnable-track]:bg-[#444] [&::-webkit-slider-thumb]:appearance-none [&::-webkit-slider-thumb]:w-[7px] [&::-webkit-slider-thumb]:h-[7px] [&::-webkit-slider-thumb]:-mt-[3px] [&::-webkit-slider-thumb]:rounded-full [&::-webkit-slider-thumb]:border [&::-webkit-slider-thumb]:border-[#a5a5a5] [&::-webkit-slider-thumb]:bg-[#222]" />
          <Icon size={11} className="ml-[7px]"><path d="M0 9l3.500-4L5 6.500 8 3l4 6z" fill="currentColor" stroke="none" /></Icon>
          <div className="ml-[11px] flex-1 h-[10px] bg-[#1c1c1c] mr-[12px]"><div className="ml-[41%] w-[27%] h-full rounded-full bg-[#2f2f2f]" /></div>
        </div>
      </div>
    </section>
  )
}

export default function App() {
  return (
    <div className="h-screen flex flex-col overflow-hidden bg-[#161616] text-[8px] leading-[10px] font-['Noto_Sans_CJK_SC',sans-serif]">
      <MenuBar />
      <TitleBar />
      <main className="flex-1 min-h-0 flex">
        <div className="flex-1 min-w-0 flex flex-col">
          <div className="flex-1 min-h-0 flex gap-[4px]">
            <MotionTools />
            <div className="flex-1 min-w-0 flex flex-col gap-[2px]">
              <Tools />
              <Composition />
            </div>
          </div>
          <Timeline />
        </div>
        <SidePanels />
      </main>
    </div>
  )
}
